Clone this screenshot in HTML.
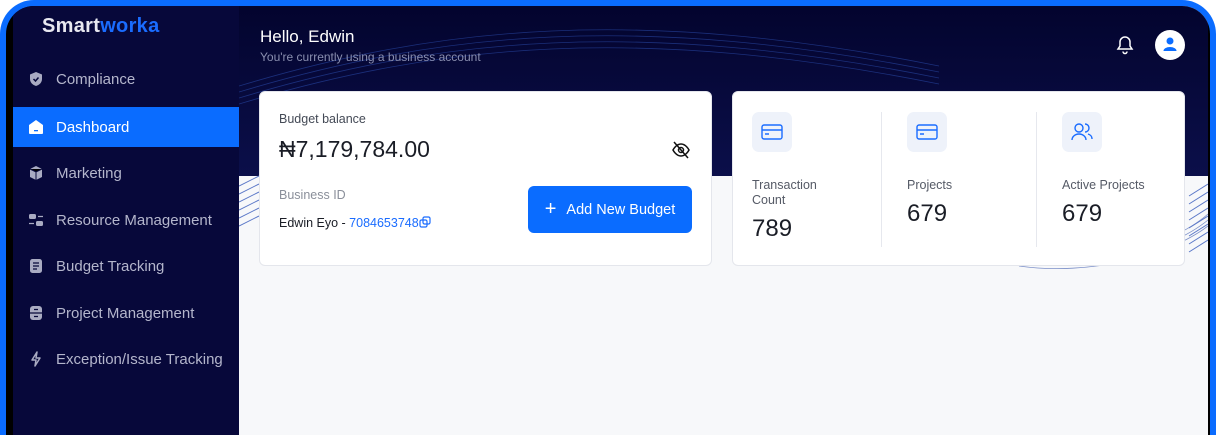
<!DOCTYPE html>
<html><head><meta charset="utf-8"><style>
*{margin:0;padding:0;box-sizing:border-box}
html,body{width:1216px;height:435px;overflow:hidden;background:#fff;font-family:"Liberation Sans",sans-serif}
.frame{position:absolute;left:0;top:0;width:1216px;height:435px;background:#0a6cff;border-radius:34px 34px 0 0;overflow:hidden}
.inner{position:absolute;left:6px;top:6px;width:1204px;height:440px;background:#000;border-radius:28px 28px 0 0;overflow:hidden}
.side{position:absolute;left:7px;top:0;width:226px;height:440px;background:#07083a}
.main{position:absolute;left:233px;top:0;width:969px;height:440px;background:#f7f8fa;overflow:hidden}
.hdr{position:absolute;left:0;top:0;width:969px;height:170px;background:linear-gradient(#03042e,#0b0f4a)}
.logo{position:absolute;left:29px;top:9px;font-size:20px;font-weight:bold;color:#e8e8f0;letter-spacing:0.3px}
.logo span{color:#1a6cff}
.item{position:absolute;left:0;width:226px;height:40px;display:flex;align-items:center;padding-left:15px;color:#b4b6cc;font-size:15px}
.item svg{width:16px;height:16px;margin-right:12px;flex-shrink:0}
.item.act{background:#0a6cff;color:#fff}
.card{position:absolute;background:#fff;border-radius:6px;border:1px solid #e4e6ec}
.ib{position:absolute;width:40px;height:40px;border-radius:7px;background:#eef2fa;display:flex;align-items:center;justify-content:center}
.lbl{position:absolute;font-size:12.5px;color:#555a66;line-height:15px}
.num{position:absolute;font-size:24px;color:#1a1d26}
</style></head><body>
<div class="frame">
<div class="inner">
 <div class="side">
  <div class="logo">Smart<span>worka</span></div>
  <div class="item" style="top:53px"><svg viewBox="0 0 16 16"><path d="M8 1L2 3.5V8c0 3.5 2.7 6 6 7 3.3-1 6-3.5 6-7V3.5z" fill="#a9abc2"/><path d="M5.5 8l2 2 3-3.5" stroke="#07083a" stroke-width="1.5" fill="none"/></svg>Compliance</div>
  <div class="item act" style="top:101px"><svg viewBox="0 0 16 16"><path d="M8 1L1 6v8a1 1 0 001 1h12a1 1 0 001-1V6z" fill="#fff"/><rect x="6" y="11" width="4" height="1.3" fill="#0a6cff"/></svg>Dashboard</div>
  <div class="item" style="top:147px"><svg viewBox="0 0 16 16"><path d="M8 1l6 3v8l-6 3-6-3V4z" fill="#a9abc2"/><path d="M2 4l6 3 6-3M8 7v8" stroke="#07083a" stroke-width="1"/></svg>Marketing</div>
  <div class="item" style="top:194px"><svg viewBox="0 0 16 16"><rect x="1" y="2" width="7" height="5" rx="1.5" fill="#a9abc2"/><rect x="8" y="9" width="7" height="5" rx="1.5" fill="#a9abc2"/><path d="M10 4.5h5M1 11.5h5" stroke="#a9abc2" stroke-width="1.3"/></svg>Resource Management</div>
  <div class="item" style="top:240px"><svg viewBox="0 0 16 16"><rect x="2" y="1" width="12" height="14" rx="2.5" fill="#a9abc2"/><path d="M5 5h6M5 8h6M5 11h4" stroke="#07083a" stroke-width="1.3"/></svg>Budget Tracking</div>
  <div class="item" style="top:287px"><svg viewBox="0 0 16 16"><rect x="2" y="1" width="12" height="14" rx="3" fill="#a9abc2"/><path d="M2 8h12M6 4.5h4M6 11.5h4" stroke="#07083a" stroke-width="1.3"/></svg>Project Management</div>
  <div class="item" style="top:333px"><svg viewBox="0 0 16 16"><path d="M9 1L4 9h4l-1 6 5-8H8z" fill="none" stroke="#a9abc2" stroke-width="1.5" stroke-linejoin="round"/></svg>Exception/Issue Tracking</div>
 </div>
 <div class="main">
  <div class="hdr"></div>
  <svg style="position:absolute;left:0;top:0" width="969" height="280">
   <g fill="none" stroke="#2a4aa8" stroke-width="0.8" opacity="0.6">
    <path d="M0 80 C200 20 400 0 700 60"/><path d="M0 86 C200 26 400 6 700 66"/><path d="M0 92 C200 32 400 12 700 72"/><path d="M0 98 C200 38 400 18 700 78"/>
    <path d="M780 260 C850 270 930 250 969 220"/><path d="M780 256 C850 266 930 246 969 214"/><path d="M780 252 C850 262 930 242 969 208"/>
   </g>
   <g stroke="#5b78c8" stroke-width="1">
    <path d="M0 180 L20 170M0 188 L20 178M0 196 L20 186M0 204 L20 194M0 212 L20 202M0 220 L20 210"/>
    <path d="M950 190 L969 178M950 198 L969 186M950 206 L969 194M950 214 L969 202M950 222 L969 210M950 230 L969 218M950 238 L969 226M950 246 L969 234"/>
   </g>
  </svg>
  <div style="position:absolute;left:21px;top:21px;font-size:17px;color:#fff">Hello, Edwin</div>
  <div style="position:absolute;left:21px;top:44px;font-size:12px;color:#8a8fb0">You're currently using a business account</div>
  <svg style="position:absolute;left:877px;top:29px" width="18" height="20" viewBox="0 0 18 20"><path d="M9 2a5 5 0 00-5 5v4l-2 3h14l-2-3V7a5 5 0 00-5-5z" fill="none" stroke="#fff" stroke-width="1.5"/><path d="M7 16.5a2 2 0 004 0" fill="none" stroke="#fff" stroke-width="1.5"/></svg>
  <div style="position:absolute;left:916px;top:24px;width:30px;height:30px;border-radius:50%;background:#fff"><svg width="30" height="30" viewBox="0 0 30 30"><circle cx="15" cy="11" r="3.5" fill="#0a6cff"/><path d="M8.5 21a6.5 4 0 0113 0z" fill="#0a6cff"/></svg></div>

  <div class="card" style="left:20px;top:85px;width:453px;height:175px">
   <div style="position:absolute;left:19px;top:20px;font-size:12.5px;color:#444a56">Budget balance</div>
   <div style="position:absolute;left:19px;top:44px;font-size:23px;color:#1a1d26">₦7,179,784.00</div>
   <svg style="position:absolute;left:411px;top:49px" width="20" height="18" viewBox="0 0 20 18"><path d="M2 9s3-6 8-6 8 6 8 6-3 6-8 6-8-6-8-6z" fill="none" stroke="#111" stroke-width="1.5"/><circle cx="10" cy="9" r="2.5" fill="none" stroke="#111" stroke-width="1.5"/><path d="M3 1l14 16" stroke="#111" stroke-width="1.5"/></svg>
   <div style="position:absolute;left:19px;top:96px;font-size:12.5px;color:#8a8f9a">Business ID</div>
   <div style="position:absolute;left:19px;top:124px;font-size:12.5px;color:#1a1d26">Edwin Eyo - <span style="color:#1a6cff">7084653748</span><svg width="12" height="12" viewBox="0 0 12 12" style="vertical-align:-1px"><rect x="1" y="4" width="7" height="7" rx="1.5" fill="none" stroke="#1a6cff" stroke-width="1.2"/><rect x="4" y="1" width="7" height="7" rx="1.5" fill="none" stroke="#1a6cff" stroke-width="1.2"/></svg></div>
   <div style="position:absolute;left:268px;top:94px;width:164px;height:47px;background:#0a6cff;border-radius:6px;color:#fff;font-size:14.5px;display:flex;align-items:center;justify-content:center"><span style="font-size:20px;margin-right:10px;font-weight:300">+</span>Add New Budget</div>
  </div>

  <div class="card" style="left:493px;top:85px;width:453px;height:175px">
   <div class="ib" style="left:19px;top:20px"><svg width="22" height="16" viewBox="0 0 22 16"><rect x="1" y="1" width="20" height="14" rx="2" fill="none" stroke="#1a6cff" stroke-width="1.4"/><path d="M1 6h20M4 10h4" stroke="#1a6cff" stroke-width="1.4"/></svg></div>
   <div class="lbl" style="left:19px;top:86px">Transaction<br>Count</div>
   <div class="num" style="left:19px;top:123px">789</div>
   <div style="position:absolute;left:148px;top:20px;width:1px;height:135px;background:#e6e8ee"></div>
   <div class="ib" style="left:174px;top:20px"><svg width="22" height="16" viewBox="0 0 22 16"><rect x="1" y="1" width="20" height="14" rx="2" fill="none" stroke="#1a6cff" stroke-width="1.4"/><path d="M1 6h20M4 10h4" stroke="#1a6cff" stroke-width="1.4"/></svg></div>
   <div class="lbl" style="left:174px;top:86px">Projects</div>
   <div class="num" style="left:174px;top:108px">679</div>
   <div style="position:absolute;left:303px;top:20px;width:1px;height:135px;background:#e6e8ee"></div>
   <div class="ib" style="left:329px;top:20px"><svg width="24" height="20" viewBox="0 0 24 20"><circle cx="9" cy="6" r="4" fill="none" stroke="#1a6cff" stroke-width="1.4"/><path d="M2 18a7 6 0 0114 0M15 2a4 4 0 010 8M18 12a6 5 0 014 5" fill="none" stroke="#1a6cff" stroke-width="1.4"/></svg></div>
   <div class="lbl" style="left:329px;top:86px">Active Projects</div>
   <div class="num" style="left:329px;top:108px">679</div>
  </div>
 </div>
</div>
</div>
</body></html>
